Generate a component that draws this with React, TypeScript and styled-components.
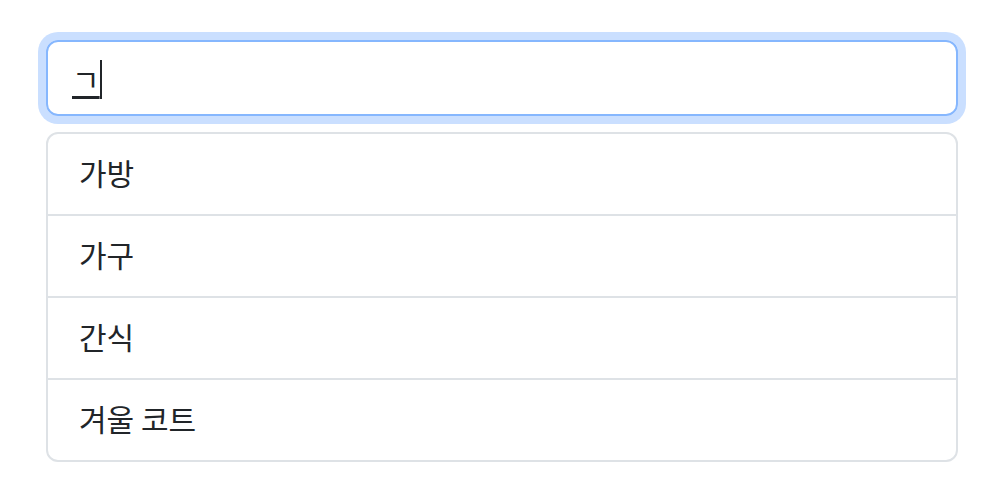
import styled, { createGlobalStyle } from "styled-components";

const GlobalStyle = createGlobalStyle`
  body {
    margin: 0;
    background: #ffffff;
    font-family: "Noto Sans CJK KR", "Noto Sans", sans-serif;
    color: #212529;
  }
`;

const Page = styled.div`
  width: 912px;
  padding: 40px 0 0 46px;
  display: flex;
  flex-direction: column;
  gap: 16px;
`;

const SearchBox = styled.div`
  box-sizing: border-box;
  height: 76px;
  padding: 12px 24px;
  border: 2px solid #86b7fe;
  border-radius: 12px;
  box-shadow: 0 0 0 8px rgba(13, 110, 253, 0.22);
  display: flex;
  align-items: center;
  font-size: 30px;
  line-height: 48px;
`;

const Composing = styled.span`
  text-decoration: underline;
  text-decoration-thickness: 3px;
  text-underline-offset: 5px;
`;

const Caret = styled.span`
  width: 2px;
  height: 39px;
  margin-top: 2px;
  background: #212529;
`;

const List = styled.ul`
  list-style: none;
  margin: 0;
  padding: 0;
  border: 2px solid #dee2e6;
  border-radius: 12px;
  overflow: hidden;
`;

const Item = styled.li`
  padding: 14px 31px 18px;
  font-size: 30px;
  line-height: 48px;
  border-top: 2px solid #dee2e6;
  &:first-child {
    border-top: none;
  }
`;

const items = ["가방", "가구", "간식", "겨울 코트"];

export default function App() {
  return (
    <>
      <GlobalStyle />
      <Page>
        <SearchBox>
          <Composing>ㄱ</Composing>
          <Caret />
        </SearchBox>
        <List>
          {items.map((item) => (
            <Item key={item}>{item}</Item>
          ))}
        </List>
      </Page>
    </>
  );
}
